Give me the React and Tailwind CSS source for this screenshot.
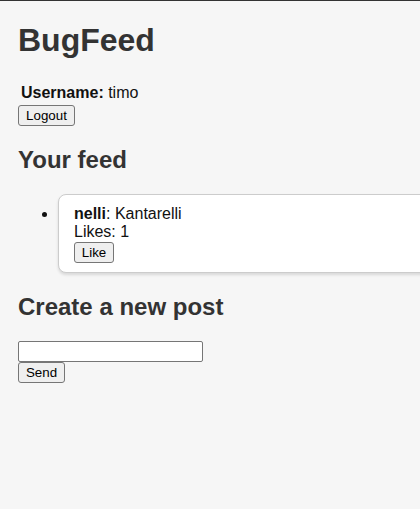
import React from "react";

const btn =
  "bg-[#efefef] border border-[#767676] rounded-[3px] px-[6px] h-[21px] text-[13.333px] leading-[15px] text-black";

export default function App() {
  return (
    <div
      className="min-h-[509px] overflow-x-hidden bg-[#f6f6f6] border-t border-[#333] px-[18px] text-[16px] leading-[18.4px] text-[#111]"
      style={{ fontFamily: '"Liberation Sans", Arial, sans-serif' }}
    >
      <h1 className="mt-[20.5px] mb-[21.5px] text-[32px] leading-[37px] font-bold text-[#333]">
        BugFeed
      </h1>
      <div className="pt-[4px] ml-[3px]">
        <b>Username:</b> timo
      </div>
      <button type="button" className={`${btn} mt-[3px] w-[57px]`}>
        Logout
      </button>

      <h2 className="mt-[20px] mb-[20px] text-[24px] leading-[27.6px] font-bold text-[#333]">
        Your feed
      </h2>
      <ul className="list-disc pl-[40px] mb-[20px]">
        <li>
          <div className="w-[480px] bg-white border border-[#ccc] rounded-[8px] pt-[10px] pb-[9px] px-[15px] shadow-[0_2px_3px_rgba(0,0,0,0.12)]">
            <div>
              <b>nelli</b>: Kantarelli
            </div>
            <div>Likes: 1</div>
            <button type="button" className={`${btn} w-[40px]`}>
              Like
            </button>
          </div>
        </li>
      </ul>

      <h2 className="mb-[21px] text-[24px] leading-[27.6px] font-bold text-[#333]">
        Create a new post
      </h2>
      <form className="flex flex-col items-start" onSubmit={(e) => e.preventDefault()}>
        <input
          type="text"
          className="w-[185px] h-[21px] bg-white border border-[#767676] rounded-[2px] px-[2px] text-[13.333px]"
        />
        <button type="submit" className={`${btn} w-[47px]`}>
          Send
        </button>
      </form>
    </div>
  );
}
